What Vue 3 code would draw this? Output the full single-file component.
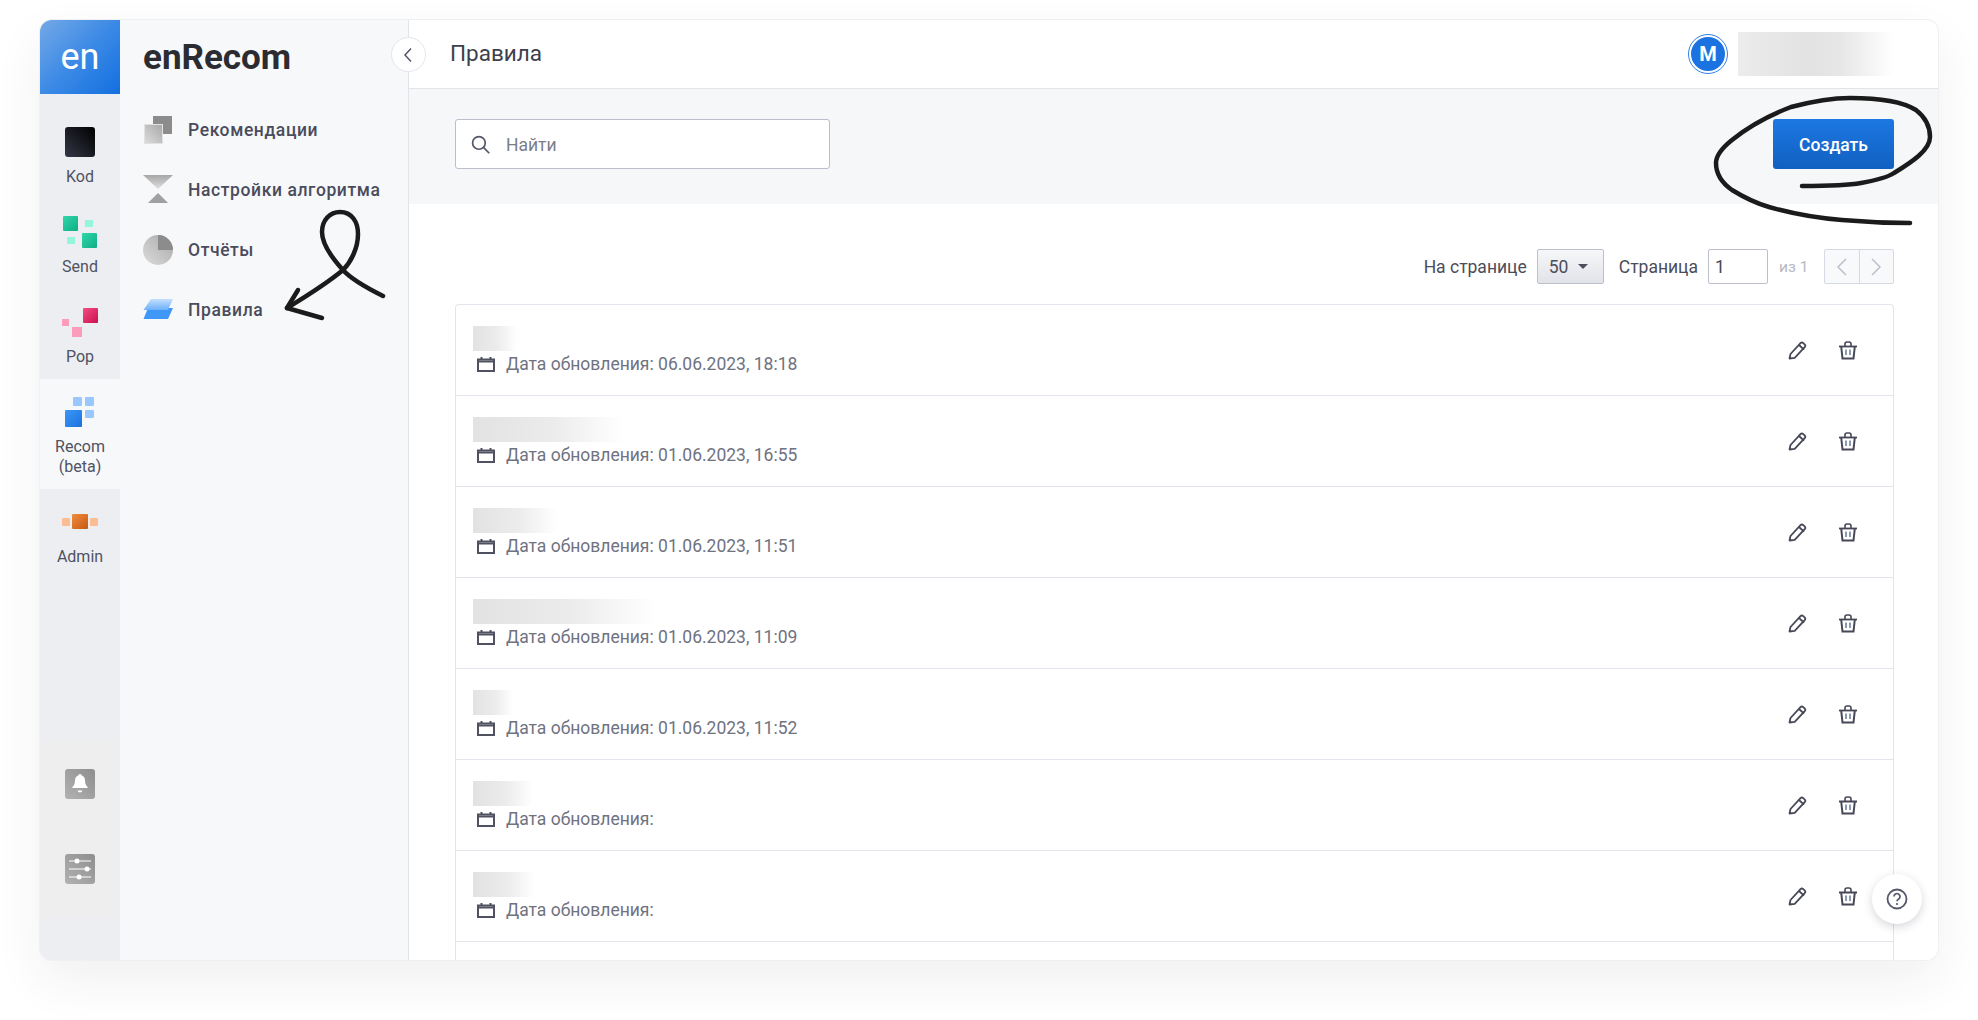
<template>
  <div class="page">
    <div class="window">
      <aside class="rail">
        <div class="logo">en</div>
        <nav class="rail-items">
          <a class="rail-item">
            <span class="rail-icon">
              <svg width="30" height="30" viewBox="0 0 30 30">
                <defs>
                  <linearGradient id="kodGrad" x1="0" y1="1" x2="1" y2="0">
                    <stop offset="0" stop-color="#343746" />
                    <stop offset="1" stop-color="#000" />
                  </linearGradient>
                </defs>
                <rect width="30" height="30" rx="3" fill="url(#kodGrad)" />
              </svg>
            </span>
            <span class="rail-label">Kod</span>
          </a>
          <a class="rail-item">
            <span class="rail-icon">
              <svg width="36" height="32" viewBox="0 0 36 32">
                <defs>
                  <linearGradient id="sendGrad" x1="0" y1="0" x2="1" y2="1">
                    <stop offset="0" stop-color="#2fd6a8" />
                    <stop offset="1" stop-color="#10ae86" />
                  </linearGradient>
                </defs>
                <rect x="1" y="0" width="15" height="15" rx="1" fill="url(#sendGrad)" />
                <rect x="23" y="4" width="8" height="7" fill="#93f6da" />
                <rect x="5" y="21" width="8" height="7" fill="#93f6da" />
                <rect x="20" y="17" width="15" height="15" rx="1" fill="url(#sendGrad)" />
              </svg>
            </span>
            <span class="rail-label">Send</span>
          </a>
          <a class="rail-item">
            <span class="rail-icon">
              <svg width="36" height="32" viewBox="0 0 36 32">
                <defs>
                  <linearGradient id="popGrad" x1="0" y1="0" x2="1" y2="1">
                    <stop offset="0" stop-color="#f34d82" />
                    <stop offset="1" stop-color="#cb104e" />
                  </linearGradient>
                </defs>
                <rect x="21" y="2" width="15" height="15" rx="1" fill="url(#popGrad)" />
                <rect x="0" y="13" width="7" height="7" fill="#fb9dba" />
                <rect x="10" y="21" width="10" height="10" fill="#fb9dba" />
              </svg>
            </span>
            <span class="rail-label">Pop</span>
          </a>
          <a class="rail-item active">
            <span class="rail-icon">
              <svg width="36" height="32" viewBox="0 0 36 32">
                <defs>
                  <linearGradient id="recomGrad" x1="0" y1="0" x2="1" y2="1">
                    <stop offset="0" stop-color="#3c97f6" />
                    <stop offset="1" stop-color="#1a72de" />
                  </linearGradient>
                </defs>
                <rect x="3" y="14" width="17" height="17" rx="1" fill="url(#recomGrad)" />
                <rect x="11" y="1" width="9" height="9" rx="1" fill="#98c8fd" />
                <rect x="23" y="1" width="9" height="9" rx="1" fill="#98c8fd" />
                <rect x="23" y="14" width="9" height="8" rx="1" fill="#98c8fd" />
              </svg>
            </span>
            <span class="rail-label">Recom<br />(beta)</span>
          </a>
          <a class="rail-item">
            <span class="rail-icon">
              <svg width="36" height="32" viewBox="0 0 36 32">
                <defs>
                  <linearGradient id="adminGrad" x1="0" y1="0" x2="1" y2="1">
                    <stop offset="0" stop-color="#f08c3e" />
                    <stop offset="1" stop-color="#c65812" />
                  </linearGradient>
                </defs>
                <rect x="0" y="12" width="8" height="8" rx="1" fill="#fdbd92" />
                <rect x="10" y="8" width="16" height="15" rx="1" fill="url(#adminGrad)" />
                <rect x="28" y="12" width="8" height="8" rx="1" fill="#fdbd92" />
              </svg>
            </span>
            <span class="rail-label">Admin</span>
          </a>
        </nav>
        <div class="rail-tools">
          <svg width="30" height="30" viewBox="0 0 30 30">
            <defs>
              <linearGradient id="toolGrad" x1="1" y1="0" x2="0" y2="1">
                <stop offset="0" stop-color="#8e8e8e" />
                <stop offset="1" stop-color="#b2b2b2" />
              </linearGradient>
            </defs>
            <rect width="30" height="30" rx="3" fill="url(#toolGrad)" />
            <path d="M15 5c.8 0 1.4.6 1.4 1.3 2.4.7 3.6 2.7 3.6 5.2 0 3 .8 4.7 2.6 6.500v1H7.400v-1C9.200 16.200 10 14.500 10 11.500c0-2.500 1.200-4.500 3.600-5.200C13.600 5.600 14.200 5 15 5z" fill="#fff" />
            <path d="M12.500 21.500h5c-.4 1.200-1.400 2-2.500 2s-2.100-.8-2.500-2z" fill="#fff" />
          </svg>
          <svg width="30" height="30" viewBox="0 0 30 30">
            <rect width="30" height="30" rx="3" fill="url(#toolGrad)" />
            <path d="M4 7h22M4 15h22M4 23h22" stroke="#fff" stroke-width="1" />
            <circle cx="12" cy="7" r="2.500" fill="#fff" />
            <circle cx="22" cy="15" r="2.500" fill="#fff" />
            <circle cx="14" cy="23" r="2.500" fill="#fff" />
          </svg>
        </div>
      </aside>

      <aside class="subnav">
        <div class="brand">enRecom</div>
        <a class="subnav-item">
          <svg width="30" height="30" viewBox="0 0 30 30">
            <defs>
              <linearGradient id="grayGrad" x1="1" y1="0" x2="0" y2="1">
                <stop offset="0" stop-color="#a8a8a8" />
                <stop offset="1" stop-color="#dcdcdc" />
              </linearGradient>
            </defs>
            <rect x="10" y="1" width="19" height="18" fill="#8c8c8c" />
            <rect x="1.500" y="9.500" width="18" height="19" fill="url(#grayGrad)" stroke="#e2e2e2" />
          </svg>
          <span>Рекомендации</span>
        </a>
        <a class="subnav-item">
          <svg width="30" height="30" viewBox="0 0 30 30">
            <defs>
              <linearGradient id="hourGrad" x1="0" y1="0" x2="0" y2="1">
                <stop offset="0" stop-color="#a6a6a6" />
                <stop offset="1" stop-color="#e0e0e0" />
              </linearGradient>
            </defs>
            <polygon points="0,0 30,0 15,14" fill="url(#hourGrad)" />
            <polygon points="15,18 25,28 5,28" fill="#a0a0a0" />
          </svg>
          <span>Настройки алгоритма</span>
        </a>
        <a class="subnav-item">
          <svg width="30" height="30" viewBox="0 0 30 30">
            <circle cx="15" cy="15" r="15" fill="url(#grayGrad)" />
            <path d="M15 0a15 15 0 0 1 15 15H15z" fill="#8c8c8c" />
          </svg>
          <span>Отчёты</span>
        </a>
        <a class="subnav-item">
          <svg width="30" height="30" viewBox="0 0 30 30">
            <defs>
              <linearGradient id="rulesGrad" x1="0" y1="0" x2="0" y2="1">
                <stop offset="0" stop-color="#c4dffc" />
                <stop offset="1" stop-color="#6cb0fb" />
              </linearGradient>
            </defs>
            <polygon points="5,13 30,13 25,24 0.500,24" fill="#3f97f8" />
            <polygon points="8,4 30,4 25,15 0.500,15" fill="url(#rulesGrad)" />
          </svg>
          <span>Правила</span>
        </a>
      </aside>

      <main class="main">
        <header class="topbar">
          <button class="collapse">
            <svg width="12" height="16" viewBox="0 0 12 16">
              <path d="M9 1.500 3 8l6 6.500" fill="none" stroke="#55586a" stroke-width="1.500" />
            </svg>
          </button>
          <h1 class="title">Правила</h1>
          <div class="avatar"><span>M</span></div>
          <div class="user-blur"></div>
        </header>

        <section class="toolbar">
          <label class="search">
            <svg width="19" height="19" viewBox="0 0 18 18">
              <circle cx="7.500" cy="7.500" r="6" fill="none" stroke="#55586a" stroke-width="1.600" />
              <path d="m11.800 11.800 5.500 5.500" stroke="#55586a" stroke-width="1.600" />
            </svg>
            <span class="search-text">Найти</span>
          </label>
          <button class="create"><span>Создать</span></button>
        </section>

        <section class="content">
          <div class="pager">
            <span class="pager-label">На странице</span>
            <div class="pager-select">
              <span>50</span>
              <i class="caret"></i>
            </div>
            <span class="pager-label page-word">Страница</span>
            <div class="pager-input">1</div>
            <span class="pager-total">из 1</span>
            <div class="pager-arrows">
              <button>
                <svg width="12" height="20" viewBox="0 0 12 20"><path d="M10 2 2 10l8 8" fill="none" stroke="#bcbfcc" stroke-width="1.500" /></svg>
              </button>
              <button>
                <svg width="12" height="20" viewBox="0 0 12 20"><path d="m2 2 8 8-8 8" fill="none" stroke="#bcbfcc" stroke-width="1.500" /></svg>
              </button>
            </div>
          </div>

          <div class="list">
            <div v-for="row in rows" :key="row.id" class="row">
              <div class="row-body">
                <div class="row-name" :style="{ width: row.nameWidth + 'px' }"></div>
                <div class="row-date">
                  <svg width="18" height="15" viewBox="0 0 18 15">
                    <path d="M4.500 0v3M13.500 0v3" stroke="#4f5160" stroke-width="2" />
                    <rect x="1" y="2.500" width="16" height="11.500" fill="none" stroke="#4f5160" stroke-width="2" />
                    <path d="M1 4.500h16" stroke="#4f5160" stroke-width="2" />
                  </svg>
                  <span>Дата обновления:{{ row.date ? ' ' + row.date : '' }}</span>
                </div>
              </div>
              <button class="row-btn edit">
                <svg width="19" height="19" viewBox="0 0 19 19">
                  <path d="M1.500 17.500 2.500 13 12.500 2.200a2 2 0 0 1 2.800-.1l1.300 1.200a2 2 0 0 1 .1 2.800L6.700 16.800z" fill="none" stroke="#464857" stroke-width="1.800" stroke-linejoin="round" />
                  <path d="m11 4 5 4.600" fill="none" stroke="#464857" stroke-width="1.800" />
                </svg>
              </button>
              <button class="row-btn trash">
                <svg width="18" height="19" viewBox="0 0 18 19">
                  <path d="M0 5.500h18" stroke="#464857" stroke-width="1.800" />
                  <path d="M6 5.500V3a2 2 0 0 1 2-2h2a2 2 0 0 1 2 2v2.500" fill="none" stroke="#464857" stroke-width="1.600" />
                  <path d="M2.200 5.500 3.500 17.500h11l1.300-12" fill="none" stroke="#464857" stroke-width="2" />
                  <path d="M7 8.500v5.500M11 8.500v5.500" stroke="#5c6f95" stroke-width="1.400" />
                </svg>
              </button>
            </div>
            <div class="row-tail"></div>
          </div>
        </section>
      </main>
    </div>

    <button class="help">
      <svg width="22" height="22" viewBox="0 0 22 22">
        <circle cx="11" cy="11" r="9.500" fill="none" stroke="#55586a" stroke-width="1.800" />
        <path d="M8 8.500a3 3 0 1 1 4.700 2.500c-1.100.7-1.700 1.300-1.700 2.300" fill="none" stroke="#55586a" stroke-width="1.700" />
        <circle cx="11" cy="16" r="1.100" fill="#55586a" />
      </svg>
    </button>

    <!-- hand drawn marks on top of the screenshot -->
    <svg class="scribble" width="1978" height="1020" viewBox="0 0 1978 1020">
      <path d="M383 296C365 287 350 278 343 270C332 258 322 245 322 232C322 220 330 212 340 212C352 212 358 222 358 234C358 248 351 262 343 270C325 285 305 297 287 308" />
      <path d="M298 290 287 308 322 318" />
      <path d="M1802 186C1825 186 1845 186 1861 183C1878 180 1888 177 1894 173C1912 162 1930 150 1930 137C1930 125 1925 117 1916 110C1900 100 1875 98 1850 98C1830 98 1810 102 1791 107C1770 115 1748 127 1732 140C1722 148 1716 155 1716 163C1716 175 1722 183 1732 190C1745 198 1755 203 1769 207C1790 213 1815 218 1842 220C1865 222 1888 223 1910 223" />
    </svg>
  </div>
</template>

<script setup>
const rows = [
  { id: 1, nameWidth: 44, date: '06.06.2023, 18:18' },
  { id: 2, nameWidth: 150, date: '01.06.2023, 16:55' },
  { id: 3, nameWidth: 84, date: '01.06.2023, 11:51' },
  { id: 4, nameWidth: 182, date: '01.06.2023, 11:09' },
  { id: 5, nameWidth: 40, date: '01.06.2023, 11:52' },
  { id: 6, nameWidth: 60, date: '' },
  { id: 7, nameWidth: 62, date: '' },
];
</script>

<style>
html,
body {
  margin: 0;
  background: #fff;
  overflow: hidden;
}
</style>

<style scoped>
.page {
  position: relative;
  box-sizing: border-box;
  width: 1978px;
  height: 1020px;
  padding: 20px 40px 60px;
  font-family: Roboto, "Liberation Sans", sans-serif;
  background: #fff;
}

.window {
  display: flex;
  height: 100%;
  overflow: hidden;
  background: #fff;
  border-radius: 12px;
  box-shadow: 0 0 0 1px #eef0f3, 0 20px 50px rgba(40, 44, 60, 0.07);
}

.rail {
  flex: 0 0 80px;
  display: flex;
  flex-direction: column;
  background: #edeef2;
}

.logo {
  height: 74px;
  display: flex;
  align-items: center;
  justify-content: center;
  color: #fff;
  font-size: 36px;
  background: linear-gradient(135deg, #74a8e6 0%, #3c8ae6 50%, #136fdf 100%);
}

.rail-items {
  padding-top: 15px;
}

.rail-item {
  display: block;
  height: 90px;
  box-sizing: border-box;
  padding-top: 17px;
  text-align: center;
}

.rail-item.active {
  height: 110px;
  background: #f7f8fa;
}

.rail-icon {
  display: flex;
  height: 32px;
  align-items: center;
  justify-content: center;
  margin-bottom: 9px;
}

.rail-label {
  display: block;
  color: #4f5262;
  font-size: 16px;
  line-height: 20px;
}

.rail-tools {
  margin-top: auto;
  margin-bottom: 42px;
  padding: 28px 0 34px;
  display: flex;
  flex-direction: column;
  align-items: center;
  gap: 55px;
  background: #eeeeef;
}

.subnav {
  flex: 0 0 289px;
  padding: 0 23px;
  box-sizing: border-box;
  background: #f7f8fa;
  border-right: 1px solid #e2e4ea;
}

.brand {
  height: 74px;
  margin-bottom: 6px;
  display: flex;
  align-items: center;
  color: #2b2c31;
  font-size: 35px;
  font-weight: 700;
}

.subnav-item {
  display: flex;
  height: 60px;
  align-items: center;
  gap: 15px;
  color: #4a4c5c;
  font-size: 17.5px;
  font-weight: 500;
  letter-spacing: 0.6px;
}

.main {
  flex: 1;
  min-width: 0;
  display: flex;
  flex-direction: column;
}

.topbar {
  position: relative;
  flex: 0 0 68px;
  display: flex;
  align-items: center;
  padding: 0 44px 0 41px;
  border-bottom: 1px solid #e2e4ea;
}

.collapse {
  position: absolute;
  left: -18px;
  top: 17px;
  width: 35px;
  height: 35px;
  padding: 0 2px 0 0;
  display: flex;
  align-items: center;
  justify-content: center;
  background: #fff;
  border: 1px solid #e4e6ec;
  border-radius: 50%;
}

.title {
  flex: 1;
  margin: 0 0 2px;
  color: #3d3f4c;
  font-size: 22.5px;
  font-weight: 400;
}

.avatar {
  box-sizing: border-box;
  width: 40px;
  height: 40px;
  margin-right: 10px;
  padding: 2px;
  background: #fff;
  border: 1px solid #2f80ed;
  border-radius: 50%;
}

.avatar span {
  display: flex;
  height: 100%;
  align-items: center;
  justify-content: center;
  color: #fff;
  font-size: 20px;
  font-weight: 700;
  background: #1a73e0;
  border-radius: 50%;
}

.user-blur {
  width: 156px;
  height: 44px;
  background: linear-gradient(90deg, #ececec 0%, #e2e2e2 45%, #e6e6e6 65%, #fff 100%);
}

.toolbar {
  flex: 0 0 115px;
  box-sizing: border-box;
  display: flex;
  justify-content: space-between;
  padding: 30px 44px 0 46px;
  background: #f6f7f9;
}

.search {
  box-sizing: border-box;
  width: 375px;
  height: 50px;
  display: flex;
  align-items: center;
  gap: 16px;
  padding-left: 15px;
  color: #7a7d8a;
  font-size: 17.5px;
  background: #fff;
  border: 1px solid #b9bdcc;
  border-radius: 3px;
}

.search-text {
  padding-top: 2px;
}

.create {
  width: 121px;
  height: 50px;
  padding: 2px 0 0;
  color: #fff;
  font-family: inherit;
  font-size: 17.5px;
  font-weight: 500;
  background: linear-gradient(180deg, #1c78e2 0%, #1160c0 100%);
  border: 0;
  border-radius: 3px;
}

.content {
  flex: 1;
  min-height: 0;
  padding: 45px 44px 0 46px;
}

.pager {
  height: 35px;
  display: flex;
  align-items: center;
  justify-content: flex-end;
  margin-bottom: 20px;
}

.pager-label {
  color: #4b4d5a;
  font-size: 17.5px;
}

.page-word {
  margin-left: 15px;
}

.pager-select {
  box-sizing: border-box;
  width: 67px;
  height: 35px;
  margin-left: 10px;
  padding: 0 11px;
  display: flex;
  align-items: center;
  gap: 10px;
  color: #4b4d5a;
  font-size: 17.5px;
  background: linear-gradient(180deg, #f6f7f9 0%, #e1e3e9 100%);
  border: 1px solid #bcc0cd;
  border-radius: 2px;
}

.caret {
  width: 0;
  height: 0;
  border-top: 5px solid #4b4d5a;
  border-left: 5px solid transparent;
  border-right: 5px solid transparent;
}

.pager-input {
  box-sizing: border-box;
  width: 60px;
  height: 35px;
  margin-left: 10px;
  padding-left: 6px;
  display: flex;
  align-items: center;
  color: #444655;
  font-size: 17.5px;
  background: #fff;
  border: 1px solid #bcc0cd;
  border-radius: 2px;
}

.pager-total {
  width: 28px;
  margin: 0 17px 0 11px;
  color: #b5b8c4;
  font-size: 15.5px;
  white-space: nowrap;
}

.pager-arrows {
  display: flex;
  width: 70px;
  height: 35px;
  box-sizing: border-box;
  background: #f8f9fb;
  border: 1px solid #d6d9e1;
  border-radius: 2px;
}

.pager-arrows button {
  flex: 1;
  padding: 0;
  display: flex;
  align-items: center;
  justify-content: center;
  background: transparent;
  border: 0;
}

.pager-arrows button + button {
  border-left: 1px solid #d6d9e1;
}

.list {
  border: 1px solid #e3e5ec;
  border-bottom: 0;
  border-radius: 4px 4px 0 0;
}

.row {
  box-sizing: border-box;
  height: 91px;
  display: flex;
  align-items: flex-start;
  padding: 0 36px 0 17px;
  border-bottom: 1px solid #e3e5ec;
}

.row-tail {
  height: 40px;
}

.row-body {
  flex: 1;
  padding-top: 21px;
}

.row-name {
  height: 25px;
  background: linear-gradient(90deg, #e2e2e2 0%, #ececec 55%, #fff 100%);
}

.row-date {
  display: flex;
  align-items: center;
  gap: 11px;
  margin-top: 2px;
  padding-left: 4px;
  color: #6f7280;
  font-size: 17.5px;
  line-height: 22px;
}

.row-btn {
  width: 19px;
  height: 19px;
  margin-top: 36px;
  padding: 0;
  background: transparent;
  border: 0;
}

.row-btn.trash {
  margin-left: 31px;
}

.help {
  position: absolute;
  left: 1872px;
  top: 874px;
  width: 50px;
  height: 50px;
  padding: 0;
  display: flex;
  align-items: center;
  justify-content: center;
  background: #fff;
  border: 0;
  border-radius: 50%;
  box-shadow: 0 3px 10px rgba(50, 55, 75, 0.2);
}

.scribble {
  position: absolute;
  left: 0;
  top: 0;
  pointer-events: none;
}

.scribble path {
  fill: none;
  stroke: #1b1b1b;
  stroke-width: 4.5;
  stroke-linecap: round;
  stroke-linejoin: round;
}
</style>
